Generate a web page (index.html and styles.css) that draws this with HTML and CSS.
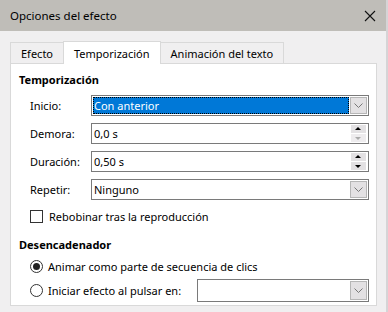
FILE: index.html
```html
<!DOCTYPE html>
<html lang="es">
<head>
  <meta charset="UTF-8"/>
  <title>Opciones del efecto</title>
  <link rel="stylesheet" href="styles.css">
</head>
<body>
  <div class="window">
    <!-- Title bar -->
    <header class="titlebar">
      <span>Opciones del efecto</span>
      <svg class="close" width="12" height="12" viewBox="0 0 12 12"><path d="M1 1L11 11M11 1L1 11" stroke="#111" stroke-width="1.1"/></svg>
    </header>

    <div class="content">
      <!-- Tabs -->
      <div class="tabs">
        <div class="tab">Efecto</div>
        <div class="tab active">Temporización</div>
        <div class="tab">Animación del texto</div>
      </div>

      <!-- Tab page -->
      <div class="panel">
        <h3>Temporización</h3>
        <div class="rows">
          <div class="row">
            <label>Inicio:</label>
            <div class="field select focus">
              <span class="value">Con anterior</span>
              <span class="dropbtn"><svg width="9" height="5" viewBox="0 0 9 5"><path d="M0.5 0.5L4.5 4.5L8.5 0.5" fill="none" stroke="#777"/></svg></span>
            </div>
          </div>
          <div class="row">
            <label>Demora:</label>
            <div class="field">
              <span class="value">0,0 s</span>
              <span class="spin"><i class="up"></i><i class="down off"></i></span>
            </div>
          </div>
          <div class="row">
            <label>Duración:</label>
            <div class="field">
              <span class="value">0,50 s</span>
              <span class="spin"><i class="up"></i><i class="down"></i></span>
            </div>
          </div>
          <div class="row">
            <label>Repetir:</label>
            <div class="field select">
              <span class="value">Ninguno</span>
              <span class="dropbtn"><svg width="9" height="5" viewBox="0 0 9 5"><path d="M0.5 0.5L4.5 4.5L8.5 0.5" fill="none" stroke="#777"/></svg></span>
            </div>
          </div>
          <div class="check">
            <span class="box"></span>
            <span>Rebobinar tras la reproducción</span>
          </div>
        </div>

        <h3 class="second">Desencadenador</h3>
        <div class="rows">
          <div class="radio-row">
            <span class="radio on"></span>
            <span>Animar como parte de secuencia de clics</span>
          </div>
          <div class="radio-row">
            <span class="radio"></span>
            <span class="radio-label">Iniciar efecto al pulsar en:</span>
            <div class="field select small">
              <span class="value"></span>
              <span class="dropbtn"><svg width="9" height="5" viewBox="0 0 9 5"><path d="M0.5 0.5L4.5 4.5L8.5 0.5" fill="none" stroke="#777"/></svg></span>
            </div>
          </div>
        </div>
      </div>
    </div>
  </div>
</body>
</html>
```

FILE: styles.css
```css
/* reset + base font */
* { box-sizing: border-box; margin: 0; padding: 0; }
body { font-family: "Noto Sans", "Open Sans", sans-serif; font-size: 11px; color: #000; background: #f0eff0; }

.window { width: 388px; height: 312px; border-right: 2px solid #d6d4d6; display: flex; flex-direction: column; }

/* title bar */
.titlebar { height: 31px; background: #bfbdb8; display: flex; align-items: center; justify-content: space-between; padding: 0 10px 0 10px; font-size: 11.5px; }
.close { display: block; }

/* tabs */
.content { padding: 10px 9px 0 10px; }
.tabs { display: flex; align-items: flex-end; height: 22px; padding-left: 1px; }
.tab { height: 21px; padding: 0 10px; border: 1px solid #d9d9d9; border-bottom: none; background: #f0eff0; display: flex; align-items: center; margin-left: -1px; }
.tab.active { height: 23px; background: #fff; position: relative; z-index: 1; margin-bottom: -1px; }

/* page */
.panel { height: 243px; background: #fff; border: 1px solid #d9d9d9; padding: 8px 7px 0 8px; }
.panel h3 { font-size: 11px; font-weight: bold; line-height: 16px; margin-bottom: 7px; }
.panel h3.second { margin-top: 14px; margin-bottom: 3px; }
.rows { padding-left: 11px; display: flex; flex-direction: column; gap: 7px; }

.row { display: flex; align-items: center; height: 21px; }
.row label { width: 61px; }

/* text box / dropdown */
.field { flex: 1; height: 21px; border: 1px solid #7a7a7a; display: flex; align-items: stretch; background: #fff; }
.field .value { flex: 1; display: flex; align-items: center; padding-left: 2px; }
.field.focus .value { background: #0078d7; color: #fff; outline: 1px dotted #000; outline-offset: -1px; margin: 1px 0 1px 1px; padding-left: 1px; }
.dropbtn { width: 17px; margin: 1px; background: #e3e1e3; border: 1px solid #b6b6b6; display: flex; align-items: center; justify-content: center; }

/* spin buttons */
.spin { width: 15px; display: flex; flex-direction: column; justify-content: center; gap: 1px; margin-right: 2px; }
.spin i { height: 8px; background: #e3e1e3; position: relative; }
.spin i::after { content: ""; position: absolute; left: 4px; border-left: 3px solid transparent; border-right: 3px solid transparent; }
.spin i.up::after { top: 2px; border-bottom: 3px solid #000; }
.spin i.down::after { top: 3px; border-top: 3px solid #000; }
.spin i.off { background: #eeecee; }
.spin i.off::after { border-top-color: #aaa; }

/* checkbox */
.check { display: flex; align-items: center; height: 14px; margin-top: 2px; gap: 6px; }
.box { width: 13px; height: 13px; border: 1px solid #333; background: #fff; }

/* radios */
.radio-row { display: flex; align-items: center; height: 21px; gap: 4px; }
.radio-row + .radio-row { margin-top: -4px; }
.radio { width: 13px; height: 13px; border: 1px solid #333; border-radius: 50%; position: relative; margin-right: 1px; }
.radio.on::after { content: ""; position: absolute; left: 2px; top: 2px; width: 7px; height: 7px; border-radius: 50%; background: #222; }
.radio-label { width: 145px; }
.field.small { flex: 1; height: 23px; }
```
